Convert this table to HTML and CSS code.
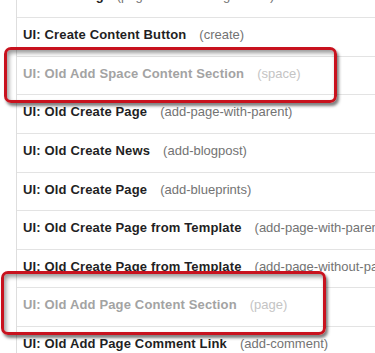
FILE: index.html
```html
<!DOCTYPE html>
<html>
<head>
<meta charset="utf-8">
<link rel="stylesheet" href="styles.css">
</head>
<body>
<div class="page">
  <ul class="list">
    <li class="row"><span class="name">UI: Watching</span><span class="key">(pagestart/watching/button)</span></li>
    <li class="row"><span class="name">UI: Create Content Button</span><span class="key">(create)</span></li>
    <li class="row off"><span class="name">UI: Old Add Space Content Section</span><span class="key">(space)</span></li>
    <li class="row"><span class="name">UI: Old Create Page</span><span class="key">(add-page-with-parent)</span></li>
    <li class="row"><span class="name">UI: Old Create News</span><span class="key">(add-blogpost)</span></li>
    <li class="row"><span class="name">UI: Old Create Page</span><span class="key">(add-blueprints)</span></li>
    <li class="row"><span class="name">UI: Old Create Page from Template</span><span class="key">(add-page-with-parent)</span></li>
    <li class="row"><span class="name">UI: Old Create Page from Template</span><span class="key">(add-page-without-parent)</span></li>
    <li class="row off"><span class="name">UI: Old Add Page Content Section</span><span class="key">(page)</span></li>
    <li class="row"><span class="name">UI: Old Add Page Comment Link</span><span class="key">(add-comment)</span></li>
  </ul>
  <div class="mark mark-one"></div>
  <div class="mark mark-two"></div>
</div>
</body>
</html>
```
FILE: styles.css
```css
html, body {
  margin: 0;
  padding: 0;
  background: #ffffff;
  overflow: hidden;
}
.page {
  position: relative;
  width: 375px;
  height: 353px;
  overflow: hidden;
  font-family: "Liberation Sans", Arial, sans-serif;
  font-size: 13px;
}
.list {
  list-style: none;
  margin: -20.625px 0 0 16px;
  padding: 0;
  border-left: 1px solid #dedede;
}
.row {
  box-sizing: border-box;
  height: 38.625px;
  padding: 9px 0 0 6px;
  border-bottom: 1px solid #e3e3e3;
  line-height: 15px;
  white-space: nowrap;
  overflow: hidden;
}
.name {
  font-weight: bold;
  color: #1f1f24;
  letter-spacing: 0.15px;
  margin-right: 13px;
}
.key {
  color: #737373;
}
.row.off .name {
  color: #a3a3a3;
}
.row.off .key {
  color: #c4c4c4;
}
.mark {
  position: absolute;
  box-sizing: border-box;
  border: 3px solid #c8121e;
  border-radius: 7px;
  box-shadow: 2px 3px 3px rgba(0, 0, 0, 0.5), inset 2px 3px 4px rgba(0, 0, 0, 0.4);
}
.mark-one {
  left: 4px;
  top: 47px;
  width: 333px;
  height: 56px;
}
.mark-two {
  left: 1px;
  top: 271px;
  width: 325px;
  height: 64px;
}
```
